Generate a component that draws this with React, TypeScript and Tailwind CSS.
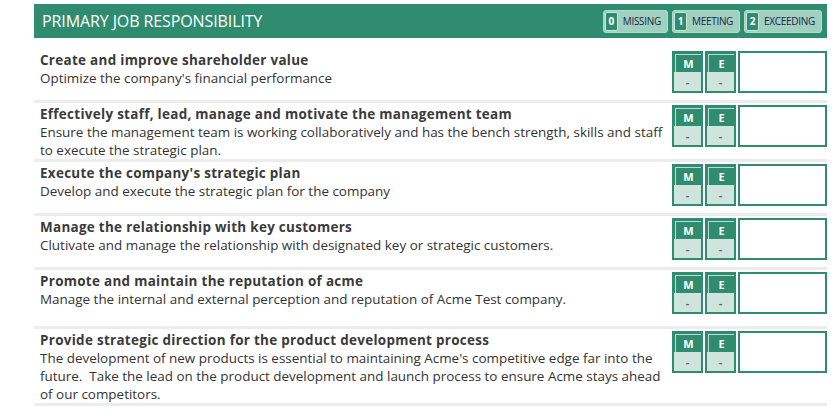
import React from "react";

const rows: { title: string; desc: string; extraLine?: boolean }[] = [
  { title: "Create and improve shareholder value", desc: "Optimize the company's financial performance" },
  {
    title: "Effectively staff, lead, manage and motivate the management team",
    desc: "Ensure the management team is working collaboratively and has the bench strength, skills and staff to execute the strategic plan.",
  },
  { title: "Execute the company's strategic plan", desc: "Develop and execute the strategic plan for the company" },
  { title: "Manage the relationship with key customers", desc: "Clutivate and manage the relationship with designated key or strategic customers." },
  {
    title: "Promote and maintain the reputation of acme",
    desc: "Manage the internal and external perception and reputation of Acme Test company.",
    extraLine: true,
  },
  {
    title: "Provide strategic direction for the product development process",
    desc: "The development of new products is essential to maintaining Acme's competitive edge far into the future.  Take the lead on the product development and launch process to ensure Acme stays ahead of our competitors.",
  },
];

function Badge({ n, label }: { n: string; label: string }) {
  return (
    <div className="flex h-[23px] items-stretch rounded-[3px] border border-[#b4dacc] bg-[#a0d0bf] p-[1px]">
      <div className="flex w-[13px] items-center justify-center rounded-[2px] border border-[#c8e6db] bg-[#2f8c6e] text-[10px] font-bold text-white">
        {n}
      </div>
      <div className="flex items-center px-[5px] text-[10px] tracking-[-0.3px] text-[#1c2444]">{label}</div>
    </div>
  );
}

function MiniBox({ letter }: { letter: string }) {
  return (
    <div className="flex h-[42px] w-[31px] flex-col border-2 border-[#2f8c6e]">
      <div className="h-[19px] bg-[#2f8c6e] pl-[1px] pt-[1px]">
        <div className="flex h-full items-center justify-center border-l border-t border-[#b9ddd0] text-[11px] font-bold leading-none text-white">
          {letter}
        </div>
      </div>
      <div className="flex flex-1 items-center justify-center bg-[#cfe4dc] text-[11px] font-bold leading-none text-[#5a6470]">
        -
      </div>
    </div>
  );
}

export default function App() {
  return (
    <div className="min-h-[420px] w-[840px] bg-white" style={{ fontFamily: '"Open Sans", "Noto Sans", sans-serif' }}>
      <div className="ml-[34px] w-[793px] pt-[4px]">
        <div className="flex h-[34px] items-center justify-between bg-[#2f8c6e] pl-[8px] pr-[5px]">
          <div className="text-[16px] tracking-[-0.1px] text-white">PRIMARY JOB RESPONSIBILITY</div>
          <div className="flex gap-[4px]">
            <Badge n="0" label="MISSING" />
            <Badge n="1" label="MEETING" />
            <Badge n="2" label="EXCEEDING" />
          </div>
        </div>
        <div className="mt-[11px]">
          {rows.map((r, i) => (
            <div key={i} className="flex border-b-[3px] border-[#ececec] pt-[2px]">
              <div className="flex-1 whitespace-pre-wrap pl-[6px] pr-[4px] text-[13.45px] leading-[18px] text-[#333]">
                <div className="font-bold tracking-[0.3px] text-[#3a3a3a]">{r.title}</div>
                <div>{r.desc}</div>
                {r.extraLine && <div className="h-[18px]" />}
              </div>
              <div className="flex gap-[2px] pb-[7px]">
                <MiniBox letter="M" />
                <MiniBox letter="E" />
                <div className="h-[42px] w-[89px] border-2 border-[#2f8c6e] bg-white" />
              </div>
            </div>
          ))}
        </div>
      </div>
    </div>
  );
}
